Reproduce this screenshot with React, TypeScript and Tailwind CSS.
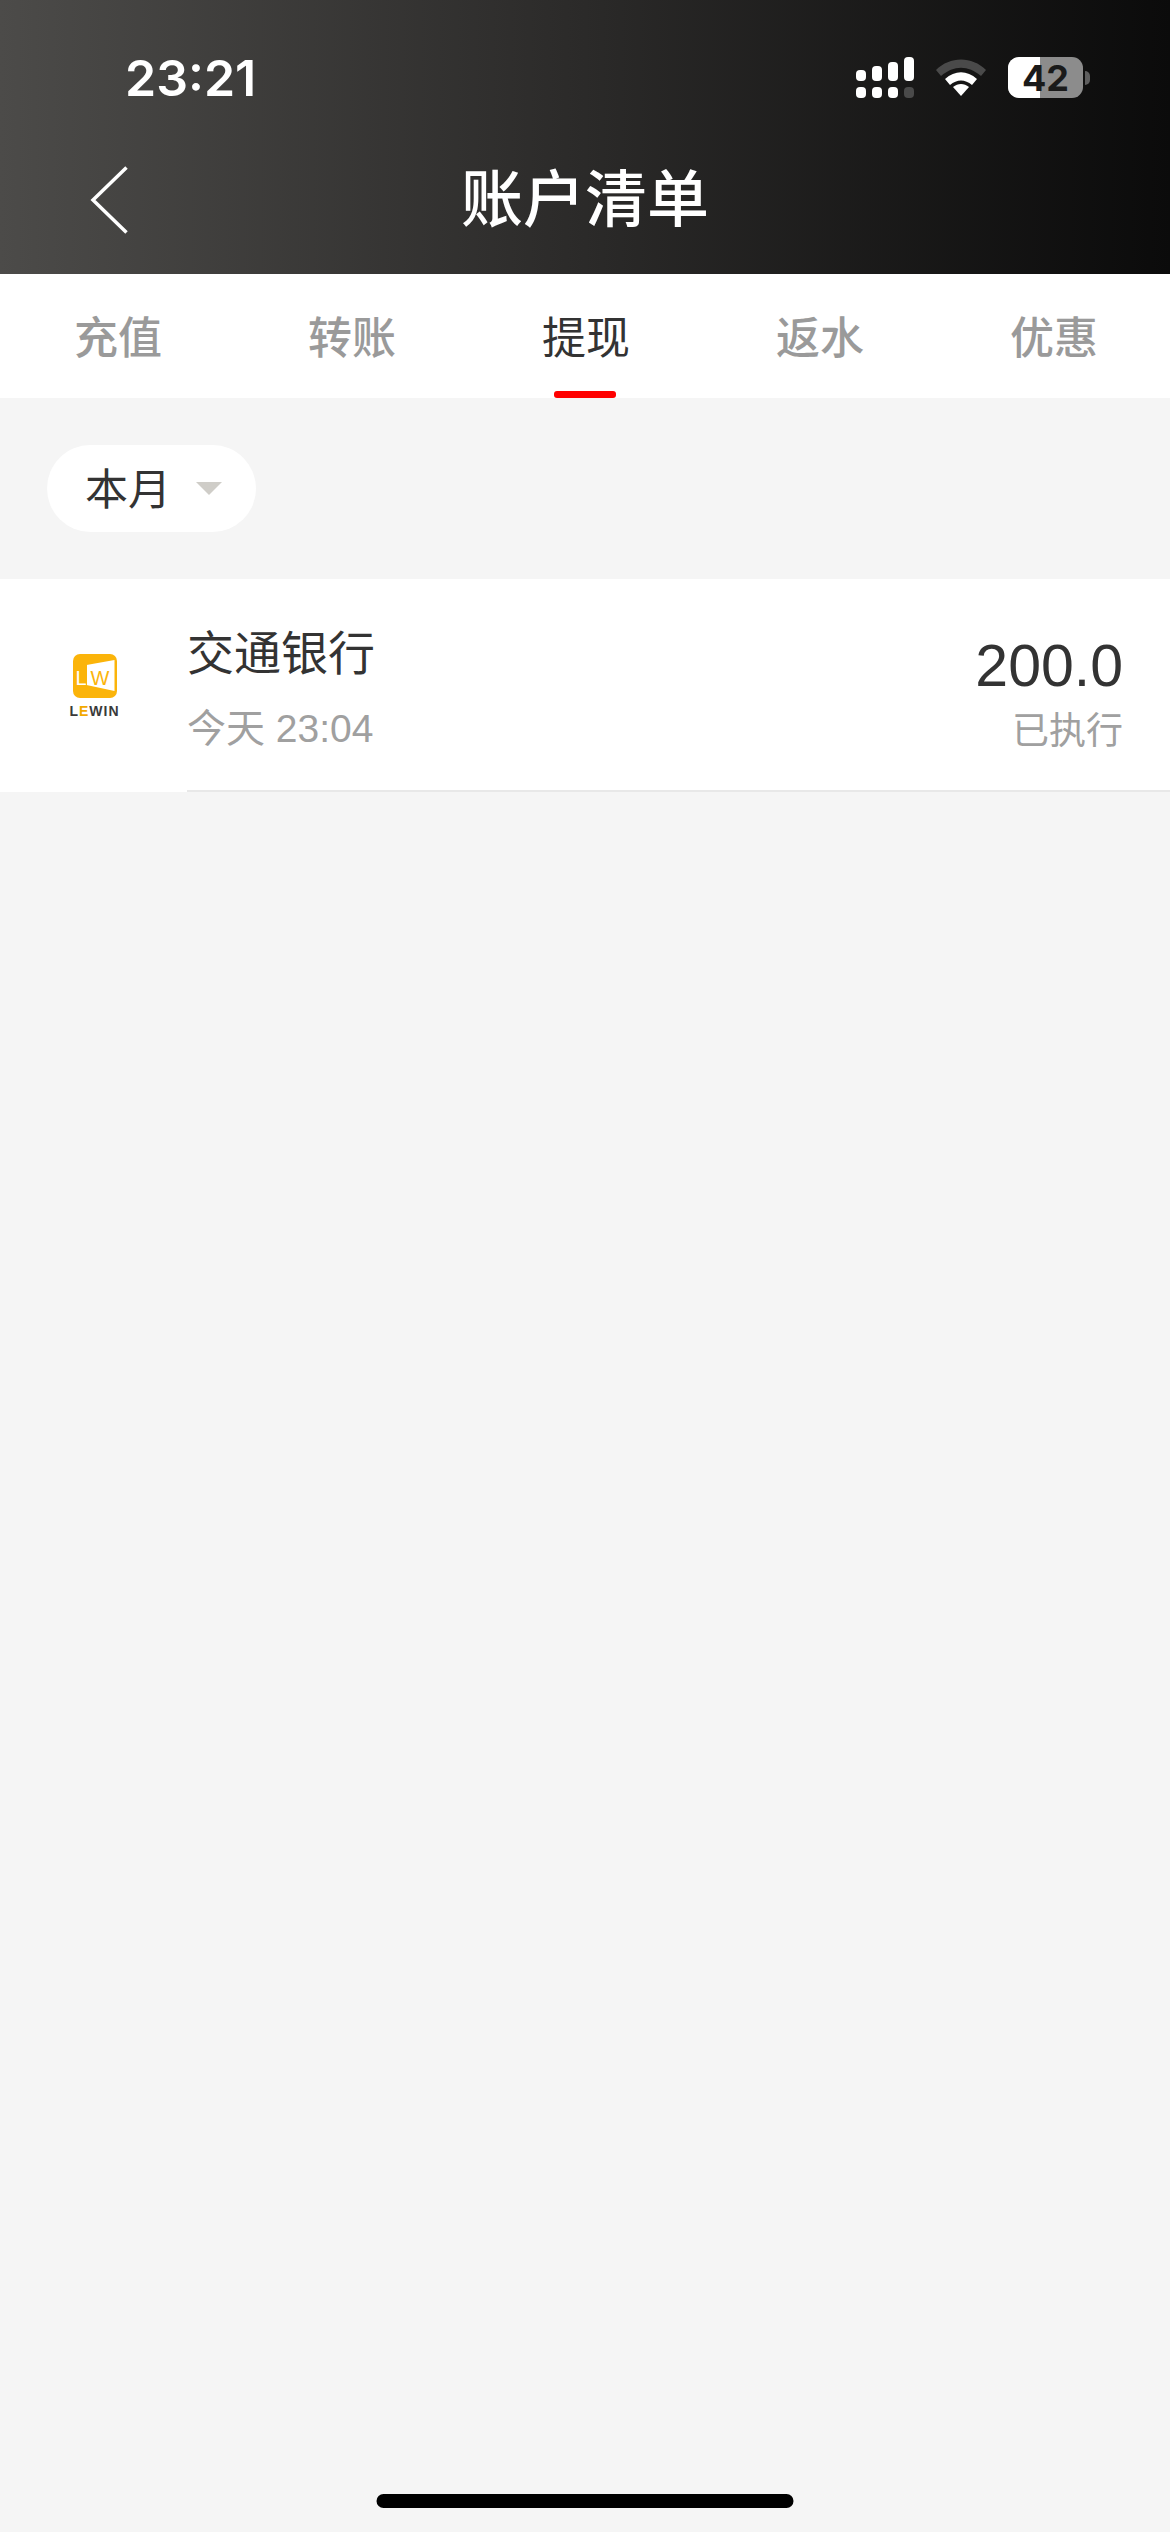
const tabs = ['充值', '转账', '提现', '返水', '优惠']
const fontStack = '[font-family:"Liberation_Sans","Noto_Sans_CJK_SC",sans-serif]'

function SignalIcon() {
  return (
    <svg width="58" height="41" viewBox="0 0 58 41" fill="white">
      <rect x="0" y="13" width="10" height="11" rx="4" />
      <rect x="16" y="9" width="10" height="15" rx="4" />
      <rect x="32" y="5" width="10" height="19" rx="4" />
      <rect x="48" y="0" width="10" height="24" rx="4" />
      <rect x="0" y="30" width="10" height="11" rx="4" />
      <rect x="16" y="30" width="10" height="11" rx="4" />
      <rect x="32" y="30" width="10" height="11" rx="4" />
      <rect x="48" y="30" width="10" height="11" rx="4" fill="#4a4a4a" />
    </svg>
  )
}

function WifiIcon() {
  return (
    <svg width="50" height="38" viewBox="0 0 50 38">
      <path d="M0 11 C14 -3 36 -3 50 11 L45 17 C32 6 18 6 5 17 Z" fill="#4a4a4a" />
      <path d="M9 20 C19 11 31 11 41 20 L36 26 C29 20 21 20 14 26 Z" fill="white" />
      <path d="M17 28 C22 24 28 24 33 28 L25 37 Z" fill="white" />
    </svg>
  )
}

function BatteryIcon() {
  return (
    <div className="flex items-center">
      <div className="relative w-[75px] h-[41px] rounded-[11px] overflow-hidden bg-[#8c8c8c] flex items-center justify-center">
        <div className="absolute left-0 top-0 bottom-0 w-[32px] bg-white" />
        <span className="relative text-[36px] font-bold text-[#1a1a1a] leading-none [font-family:Inter,sans-serif]">42</span>
      </div>
      <div className="w-[5px] h-[14px] ml-[2px] rounded-r-full bg-[#5e5e5e]" />
    </div>
  )
}

function BackIcon() {
  return (
    <svg width="38" height="68" viewBox="0 0 38 68" fill="none" stroke="white" strokeWidth="3.5">
      <path d="M36.5 1.5 L3 34 L36.5 66.5" />
    </svg>
  )
}

function LewinLogo() {
  return (
    <div className="flex flex-col items-center w-[50px]">
      <div className="relative w-[44px] h-[44px] rounded-[7px] bg-[#fbb40a] overflow-hidden [font-family:'Liberation_Sans',sans-serif]">
        <span className="absolute left-[3px] top-[14px] text-[20px] leading-none text-white">L</span>
        <div className="absolute left-[14px] top-[6px] w-[28px] h-[31px] bg-white [clip-path:polygon(0_16%,100%_0,100%_100%,0_81%)]" />
        <span className="absolute left-[18px] top-[14px] text-[20px] leading-none text-[#fbb40a]">W</span>
      </div>
      <div className="mt-[7px] text-[14px] leading-[12px] font-bold tracking-[1px] text-[#3a3a3a] [font-family:'Liberation_Sans',sans-serif]">
        L<span className="text-[#f2a900]">E</span>WIN
      </div>
    </div>
  )
}

export default function App() {
  return (
    <div className={`w-[1170px] h-[2532px] bg-[#f5f5f5] flex flex-col relative overflow-hidden ${fontStack}`}>
      <header className="h-[274px] bg-gradient-to-r from-[#4c4b49] via-[#2b2a29] to-[#0b0b0b] shrink-0 flex flex-col text-white">
        <div className="h-[130px] pl-[125px] pr-[80px] pt-[48px] flex items-start justify-between">
          <span className="text-[50px] leading-[60px] font-semibold [font-family:Inter,sans-serif]">23:21</span>
          <div className="flex items-center gap-[22px] pt-[9px]">
            <SignalIcon />
            <WifiIcon />
            <BatteryIcon />
          </div>
        </div>
        <div className="grid grid-cols-[1fr_auto_1fr] items-center h-[100px] mt-[20px]">
          <div className="pl-[90px] flex">
            <BackIcon />
          </div>
          <span className="text-[62px] leading-none font-medium pt-[2px]">账户清单</span>
        </div>
      </header>

      <nav className="h-[124px] bg-white flex shrink-0">
        {tabs.map((tab, i) => (
          <div key={tab} className="relative flex-1 flex items-center justify-center pt-[6px] pl-[2px]">
            <span className={`text-[44px] leading-none ${i === 2 ? 'font-normal text-[#333333]' : 'font-medium text-[#9a9a9a]'}`}>{tab}</span>
            {i === 2 && <div className="absolute bottom-0 left-1/2 -translate-x-1/2 w-[62px] h-[7px] rounded-[3px] bg-[#ff0000]" />}
          </div>
        ))}
      </nav>

      <div className="px-[47px] py-[47px]">
        <div className="w-[209px] h-[87px] rounded-full bg-white flex items-center pl-[38px] gap-[25px]">
          <span className="text-[43px] leading-none text-[#333333] pt-[4px]">本月</span>
          <div className="w-0 h-0 border-x-[13px] border-x-transparent border-t-[13px] border-t-[#cfcdc8]" />
        </div>
      </div>

      <div className="h-[213px] bg-white flex items-center">
        <div className="w-[187px] flex justify-center shrink-0 pl-[2px]">
          <LewinLogo />
        </div>
        <div className="flex-1 h-full flex items-center justify-between pr-[47px] border-b-2 border-[#e8e8e8]">
          <div className="flex flex-col gap-[25px] pt-[8px]">
            <span className="text-[47px] leading-[56px] text-[#333333]">交通银行</span>
            <span className="text-[39px] leading-[44px] text-[#a0a0a0]">今天 23:04</span>
          </div>
          <div className="flex flex-col items-end gap-[11px] pt-[18px]">
            <span className="text-[59px] leading-[66px] text-[#333333]">200.0</span>
            <span className="text-[37px] leading-[44px] text-[#a0a0a0]">已执行</span>
          </div>
        </div>
      </div>

      <div className="absolute bottom-[24px] left-1/2 -translate-x-1/2 w-[417px] h-[14px] rounded-full bg-black" />
    </div>
  )
}
